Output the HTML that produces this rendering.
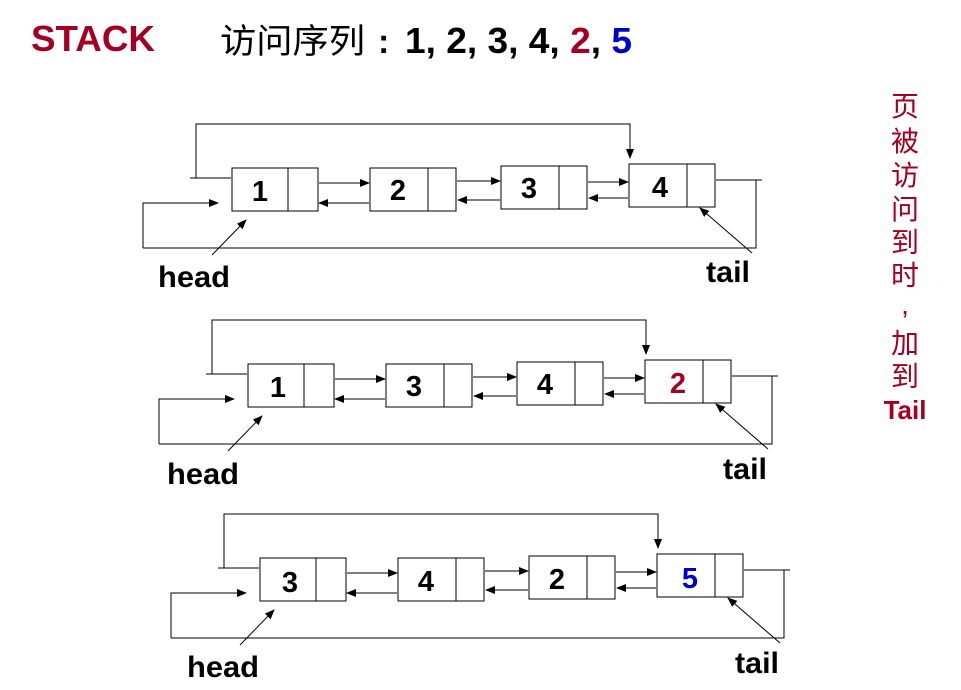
<!DOCTYPE html>
<html><head><meta charset="utf-8"><style>
html,body{margin:0;padding:0;background:#fff;width:961px;height:690px;overflow:hidden}
svg{display:block}
.b{font-family:"Liberation Sans",Arial,sans-serif;font-weight:bold}
.c{font-family:"Liberation Sans","Noto Sans CJK SC",sans-serif;font-weight:400}
</style></head><body>
<svg width="961" height="690" viewBox="0 0 961 690" xmlns="http://www.w3.org/2000/svg">
<defs>
<marker id="a" markerWidth="10" markerHeight="8" refX="9" refY="4" orient="auto" markerUnits="userSpaceOnUse">
<path d="M0,0 L10,4 L0,8 Z" fill="#000"/></marker>
<g id="d" fill="none" stroke="#000" stroke-width="1">
<rect x="232" y="168" width="86" height="43"/><line x1="288" y1="168" x2="288" y2="211"/>
<rect x="370" y="168" width="86" height="43"/><line x1="428" y1="168" x2="428" y2="211"/>
<rect x="501" y="166" width="86" height="43"/><line x1="559" y1="166" x2="559" y2="209"/>
<rect x="629" y="164" width="86" height="43"/><line x1="687" y1="164" x2="687" y2="207"/>
<line x1="319" y1="183" x2="369" y2="183" marker-end="url(#a)"/>
<line x1="369" y1="203" x2="319" y2="203" marker-end="url(#a)"/>
<line x1="457" y1="181" x2="500" y2="181" marker-end="url(#a)"/>
<line x1="500" y1="200" x2="458" y2="200" marker-end="url(#a)"/>
<line x1="588" y1="182" x2="628" y2="182" marker-end="url(#a)"/>
<line x1="628" y1="198" x2="589" y2="198" marker-end="url(#a)"/>
<polyline points="190,178 196,178 196,124 630,124 630,158" marker-end="url(#a)"/>
<line x1="196" y1="178" x2="231" y2="178"/>
<polyline points="143,248 143,203 218,203" marker-end="url(#a)"/>
<polyline points="143,248 756,248 756,180 716,180"/>
<line x1="756" y1="180" x2="762" y2="180"/>
<line x1="212" y1="255" x2="246" y2="220" marker-end="url(#a)"/>
<line x1="752" y1="253" x2="700" y2="208" marker-end="url(#a)"/>
</g>
</defs>
<text x="31" y="51" class="b" font-size="36" fill="#a50021" textLength="124" lengthAdjust="spacingAndGlyphs">STACK</text>
<text x="220" y="53" class="c" font-size="34" fill="#000" textLength="145" lengthAdjust="spacingAndGlyphs">访问序列</text>
<text x="378" y="53" class="b" font-size="34" fill="#000">:</text>
<text x="405" y="53" class="b" font-size="36" fill="#000" textLength="227" lengthAdjust="spacingAndGlyphs">1, 2, 3, 4, <tspan fill="#a50021">2</tspan>, <tspan fill="#0000cc">5</tspan></text>

<use href="#d"/>
<g class="b" font-size="29" text-anchor="middle">
<text x="260" y="201">1</text><text x="398" y="200">2</text><text x="529" y="198">3</text><text x="660" y="197">4</text>
</g>
<g class="b" font-size="30">
<text x="158" y="287" textLength="72" lengthAdjust="spacingAndGlyphs">head</text><text x="706" y="282" textLength="44" lengthAdjust="spacingAndGlyphs">tail</text>
</g>

<use href="#d" transform="translate(16,196)"/>
<g class="b" font-size="29" text-anchor="middle">
<text x="278" y="397">1</text><text x="414" y="396">3</text><text x="545" y="394">4</text><text x="678" y="393" fill="#a50021">2</text>
</g>
<g class="b" font-size="30">
<text x="167" y="484" textLength="72" lengthAdjust="spacingAndGlyphs">head</text><text x="723" y="479" textLength="44" lengthAdjust="spacingAndGlyphs">tail</text>
</g>

<use href="#d" transform="translate(28,390)"/>
<g class="b" font-size="29" text-anchor="middle">
<text x="290" y="592">3</text><text x="426" y="591">4</text><text x="557" y="589">2</text><text x="690" y="588" fill="#0000cc">5</text>
</g>
<g class="b" font-size="30">
<text x="187" y="677" textLength="72" lengthAdjust="spacingAndGlyphs">head</text><text x="735" y="673" textLength="44" lengthAdjust="spacingAndGlyphs">tail</text>
</g>

<g class="c" font-size="28" fill="#a50021" text-anchor="middle">
<text x="905" y="116">页</text><text x="905" y="151">被</text><text x="905" y="185">访</text><text x="905" y="219">问</text><text x="905" y="252">到</text><text x="905" y="285">时</text><text x="905" y="314">,</text><text x="905" y="353">加</text><text x="905" y="386">到</text>
</g>
<text x="905" y="419" class="b" font-size="26" fill="#a50021" text-anchor="middle">Tail</text>
</svg>
</body></html>
